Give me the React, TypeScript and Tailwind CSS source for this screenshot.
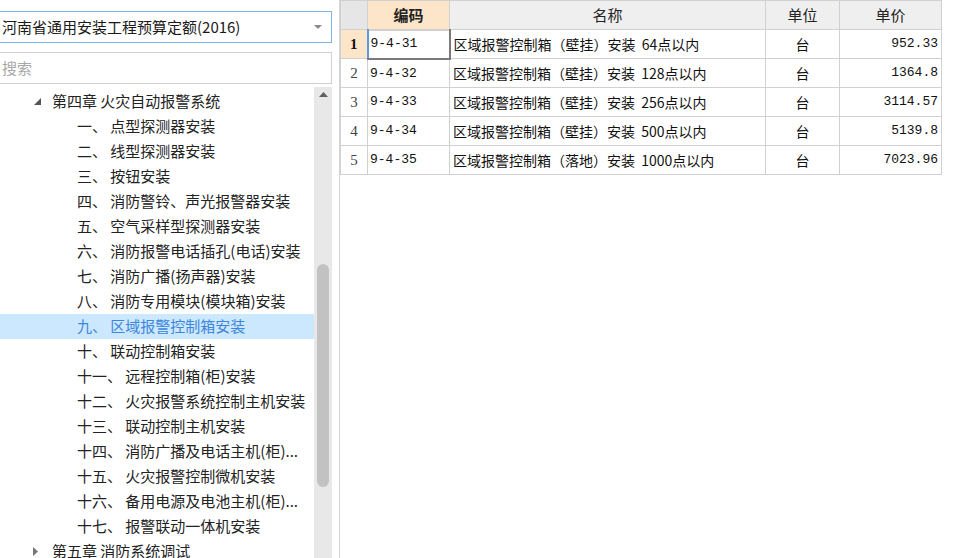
// 定额库浏览页
// 左: 定额库选择 + 搜索 + 章节树 / 右: 子目表格

const CJK = "font-['Noto_Sans_CJK_SC','Microsoft_YaHei',sans-serif]";
const MONO = "font-['Liberation_Mono','Noto_Sans_CJK_SC',monospace]";

const items = [
  "一、 点型探测器安装",
  "二、 线型探测器安装",
  "三、 按钮安装",
  "四、 消防警铃、声光报警器安装",
  "五、 空气采样型探测器安装",
  "六、 消防报警电话插孔(电话)安装",
  "七、 消防广播(扬声器)安装",
  "八、 消防专用模块(模块箱)安装",
  "九、 区域报警控制箱安装",
  "十、 联动控制箱安装",
  "十一、 远程控制箱(柜)安装",
  "十二、 火灾报警系统控制主机安装",
  "十三、 联动控制主机安装",
  "十四、 消防广播及电话主机(柜)...",
  "十五、 火灾报警控制微机安装",
  "十六、 备用电源及电池主机(柜)...",
  "十七、 报警联动一体机安装",
];

const rows = [
  { code: "9-4-31", name: "区域报警控制箱（壁挂）安装", spec: "64点以内", unit: "台", price: "952.33" },
  { code: "9-4-32", name: "区域报警控制箱（壁挂）安装", spec: "128点以内", unit: "台", price: "1364.8" },
  { code: "9-4-33", name: "区域报警控制箱（壁挂）安装", spec: "256点以内", unit: "台", price: "3114.57" },
  { code: "9-4-34", name: "区域报警控制箱（壁挂）安装", spec: "500点以内", unit: "台", price: "5139.8" },
  { code: "9-4-35", name: "区域报警控制箱（落地）安装", spec: "1000点以内", unit: "台", price: "7023.96" },
];

export default function App() {
  const selected = 8; // 九、区域报警控制箱安装

  return (
    <div className={`w-[957px] h-[558px] overflow-hidden bg-white flex ${CJK} text-[#222]`}>
      {/* 左侧面板 */}
      <div className="w-[339px] shrink-0 flex flex-col">
        {/* 定额库下拉 */}
        <div className="mt-[11px] ml-[-4px] w-[336px] h-[32px] border border-[#7eb4ea] flex items-center pl-[5px] pr-[9px]">
          <span className="flex-1 text-[15px] text-[#1a1a1a] whitespace-nowrap">河南省通用安装工程预算定额(2016)</span>
          <svg width="8" height="5" viewBox="0 0 8 5">
            <polygon points="0,0 8,0 4,4" fill="#8a8a8a" />
          </svg>
        </div>

        {/* 搜索 */}
        <div className="mt-[9px] ml-[-4px] w-[336px] h-[32px] border border-[#cfcfcf] flex items-center pl-[5px]">
          <span className="text-[15px] text-[#a8a8a8]">搜索</span>
        </div>

        {/* 章节树 + 滚动条 */}
        <div className="mt-[3px] flex-1 flex min-h-0">
          <div className="w-[314px] pt-[2px] flex flex-col">
            <div className="h-[25px] shrink-0 flex items-center">
              <svg className="ml-[34px] mr-[11px]" width="7" height="7" viewBox="0 0 7 7">
                <polygon points="7,0 7,7 0,7" fill="#555" />
              </svg>
              <span className="text-[15px]">第四章 火灾自动报警系统</span>
            </div>
            {items.map((t, i) => (
              <div
                key={t}
                className={`h-[25px] shrink-0 flex items-center pl-[77px] ${
                  i === selected ? "bg-[#cce8ff] text-[#3d86dc]" : ""
                }`}
              >
                <span className="text-[15px] whitespace-nowrap">{t}</span>
              </div>
            ))}
            <div className="h-[25px] shrink-0 flex items-center">
              <svg className="ml-[33px] mr-[14px]" width="5" height="9" viewBox="0 0 5 9">
                <polygon points="0,0 5,4.5 0,9" fill="#777" />
              </svg>
              <span className="text-[15px]">第五章 消防系统调试</span>
            </div>
          </div>

          {/* 滚动条 */}
          <div className="w-[18px] bg-[#e8e8e8] flex flex-col items-center">
            <svg className="mt-[5px]" width="9" height="5" viewBox="0 0 9 5">
              <polygon points="4.5,0 9,5 0,5" fill="#606060" />
            </svg>
            <div className="mt-[167px] w-[12px] h-[223px] rounded-[6px] bg-[#c2c2c2]" />
          </div>
        </div>
      </div>

      {/* 分隔线 */}
      <div className="w-px shrink-0 bg-[#d4d4d4]" />

      {/* 右侧表格 */}
      <div className="flex-1">
        <table className="border-collapse table-fixed text-[14px]">
          <colgroup>
            <col className="w-[27px]" />
            <col className="w-[82px]" />
            <col className="w-[316px]" />
            <col className="w-[74px]" />
            <col className="w-[102px]" />
          </colgroup>
          <thead>
            <tr className="h-[29px]">
              <th className="border border-[#d0d0d0] bg-[#e6e6e6] p-0" />
              <th className="border border-[#d0d0d0] bg-[#fde5c9] p-0 text-[15px] font-bold text-[#222]">编码</th>
              <th className="border border-[#d0d0d0] bg-[#efefef] p-0 text-[15px] font-normal text-[#222]">名称</th>
              <th className="border border-[#d0d0d0] bg-[#efefef] p-0 text-[15px] font-normal text-[#222]">单位</th>
              <th className="border border-[#d0d0d0] bg-[#efefef] p-0 text-[15px] font-normal text-[#222]">单价</th>
            </tr>
          </thead>
          <tbody>
            {rows.map((r, i) => (
              <tr key={r.code} className="h-[29px]">
                <td
                  className={`border border-[#d0d0d0] p-0 text-center font-['Liberation_Serif',serif] text-[15px] ${
                    i === 0 ? "bg-[#fde5c9] font-bold text-[#111]" : "text-[#444]"
                  }`}
                >
                  {i + 1}
                </td>
                <td
                  className={`p-0 pl-[2px] ${MONO} text-[13px] text-[#111] ${
                    i === 0
                      ? "border-2 border-t-[#d0d0d0] border-l-[#5b9be0] border-r-[#7a7a7a] border-b-[#7a7a7a]"
                      : "border border-[#d0d0d0]"
                  }`}
                >
                  {r.code}
                </td>
                <td className="border border-[#d0d0d0] p-0 pl-[3px] text-[#111] whitespace-nowrap">
                  {r.name} <span className="ml-[3px]">{r.spec}</span>
                </td>
                <td className="border border-[#d0d0d0] p-0 text-center text-[#111]">{r.unit}</td>
                <td className={`border border-[#d0d0d0] p-0 pr-[3px] text-right ${MONO} text-[13px] text-[#111]`}>
                  {r.price}
                </td>
              </tr>
            ))}
          </tbody>
        </table>
      </div>
    </div>
  );
}
